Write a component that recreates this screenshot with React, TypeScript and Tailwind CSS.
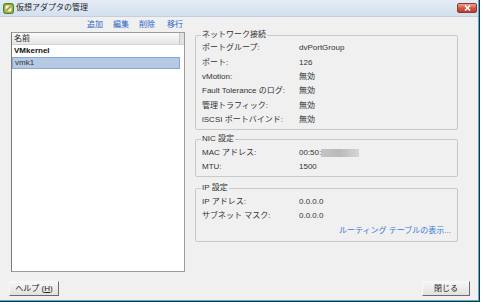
import type { ReactNode } from 'react'

function GroupBox({ title, className, children }: { title: string; className?: string; children: ReactNode }) {
  return (
    <div className={`relative border border-[#c9c9c9] rounded-[2px] ${className ?? ''}`}>
      <span className="absolute left-[5px] top-[-6px] px-[1px] leading-[10px] bg-[#f0f0f0] text-[#333]">{title}</span>
      {children}
    </div>
  )
}

function Row({ label, children, h = 'h-[14.4px]' }: { label: string; children: ReactNode; h?: string }) {
  return (
    <div className={`flex items-center pl-[6px] ${h}`}>
      <span className="w-[97px] shrink-0 text-[#333]">{label}</span>
      <span className="text-[#333]">{children}</span>
    </div>
  )
}

function WinButton({ children, className }: { children: ReactNode; className?: string }) {
  return (
    <button
      className={`h-[15px] flex items-center justify-center bg-gradient-to-b from-[#f6f6f6] to-[#e2e2e2] border border-t-[#f8f8f8] border-l-[#f8f8f8] border-r-[#6b6b6b] border-b-[#6b6b6b] text-[#222] ${className ?? ''}`}
    >
      {children}
    </button>
  )
}

export default function App() {
  return (
    <div className="w-[484px] h-[306px] bg-white font-[family-name:'Liberation_Sans','Noto_Sans_CJK_JP',sans-serif] text-[8px] leading-none">
      <div className="w-[480px] h-[302px] border-r border-b border-[#2e2e2e]">
        <div className="h-full flex flex-col border-r border-b border-[#3ab4e6] bg-[#f0f0f0]">
          {/* Title bar */}
          <div className="h-[17px] shrink-0 flex items-center pl-[3px] bg-gradient-to-b from-[#e4ecf6] to-[#d4e0ef] border-b border-[#c3cfdd]">
            <svg width="11" height="11" viewBox="0 0 11 11">
              <rect x="0.5" y="0.5" width="10" height="10" rx="2" fill="#7cb342" stroke="#4f7f26" />
              <rect x="2.5" y="2.5" width="6" height="6" rx="1" fill="#f3f7ea" />
              <path d="M3 8 L8 3" stroke="#e0901c" strokeWidth="2" />
            </svg>
            <span className="ml-[2px] text-[8px] text-[#1e1e1e]">仮想アダプタの管理</span>
            <div className="ml-auto mr-[1px] w-[20px] h-[10px] rounded-[2px] border border-[#8c3a2e] bg-gradient-to-b from-[#e8a496] via-[#d05a44] to-[#c0392b] flex items-center justify-center">
              <svg width="7" height="6" viewBox="0 0 7 6">
                <path d="M1 0.5 L6 5.5 M6 0.5 L1 5.5" stroke="white" strokeWidth="1.6" />
              </svg>
            </div>
          </div>

          {/* Body */}
          <div className="flex">
            {/* Left column */}
            <div className="ml-[11px] w-[174px] flex flex-col">
              <div className="h-[15px] flex items-center justify-end pr-[2px] text-[#2a62c8]">
                <span>追加</span>
                <span className="ml-[10px]">編集</span>
                <span className="ml-[10px]">削除</span>
                <span className="ml-[12px]">移行</span>
              </div>
              <div className="h-[240px] border border-[#9c9c9c] border-l-[#7a7a7a] bg-white flex flex-col">
                <div className="h-[12px] flex bg-gradient-to-b from-[#fafafa] to-[#e6e6e6] border-b border-[#d2d2d2]">
                  <span className="flex-1 flex items-center pl-[2px] text-[#222]">名前</span>
                  <span className="w-[5px] border-l border-[#c8c8c8] bg-[#e2e2e2]" />
                </div>
                <div className="h-[12px] flex items-center pl-[2px] font-bold text-[#111]">VMkernel</div>
                <div className="h-[12px] mr-[4px] flex items-center pl-[2px] bg-[#b5c9e3] border border-[#87a8d2] text-[#333]">
                  vmk1
                </div>
              </div>
            </div>

            {/* Right column */}
            <div className="ml-[10px] w-[263px] pt-[18px] flex flex-col">
              <GroupBox title="ネットワーク接続" className="pt-[5px] pb-[2px]">
                <Row label="ポートグループ:">dvPortGroup</Row>
                <Row label="ポート:">126</Row>
                <Row label="vMotion:">無効</Row>
                <Row label="Fault Tolerance のログ:">無効</Row>
                <Row label="管理トラフィック:">無効</Row>
                <Row label="iSCSI ポートバインド:">無効</Row>
              </GroupBox>
              <GroupBox title="NIC 設定" className="mt-[9px] pt-[6px] pb-[2px]">
                <Row label="MAC アドレス:" h="h-[14px]">
                  <span className="flex items-center">
                    00:50:
                    <span className="inline-block w-[38px] h-[8px] bg-gradient-to-r from-[#c4c4c4] via-[#bababa] to-[#d6d6d6]" />
                  </span>
                </Row>
                <Row label="MTU:" h="h-[14px]">1500</Row>
              </GroupBox>
              <GroupBox title="IP 設定" className="mt-[11px] pt-[5px] pb-[3px]">
                <Row label="IP アドレス:" h="h-[14.5px]">0.0.0.0</Row>
                <Row label="サブネット マスク:" h="h-[14.5px]">0.0.0.0</Row>
                <div className="h-[14.5px] flex items-center justify-end pr-[6px] text-[#3a78d8]">ルーティング テーブルの表示...</div>
              </GroupBox>
            </div>
          </div>

          {/* Buttons */}
          <div className="mt-[9px] flex">
            <WinButton className="ml-[9px] w-[50px]">
              ヘルプ (<span className="underline">H</span>)
            </WinButton>
            <WinButton className="ml-auto mr-[8px] w-[48px]">閉じる</WinButton>
          </div>
        </div>
      </div>
    </div>
  )
}
